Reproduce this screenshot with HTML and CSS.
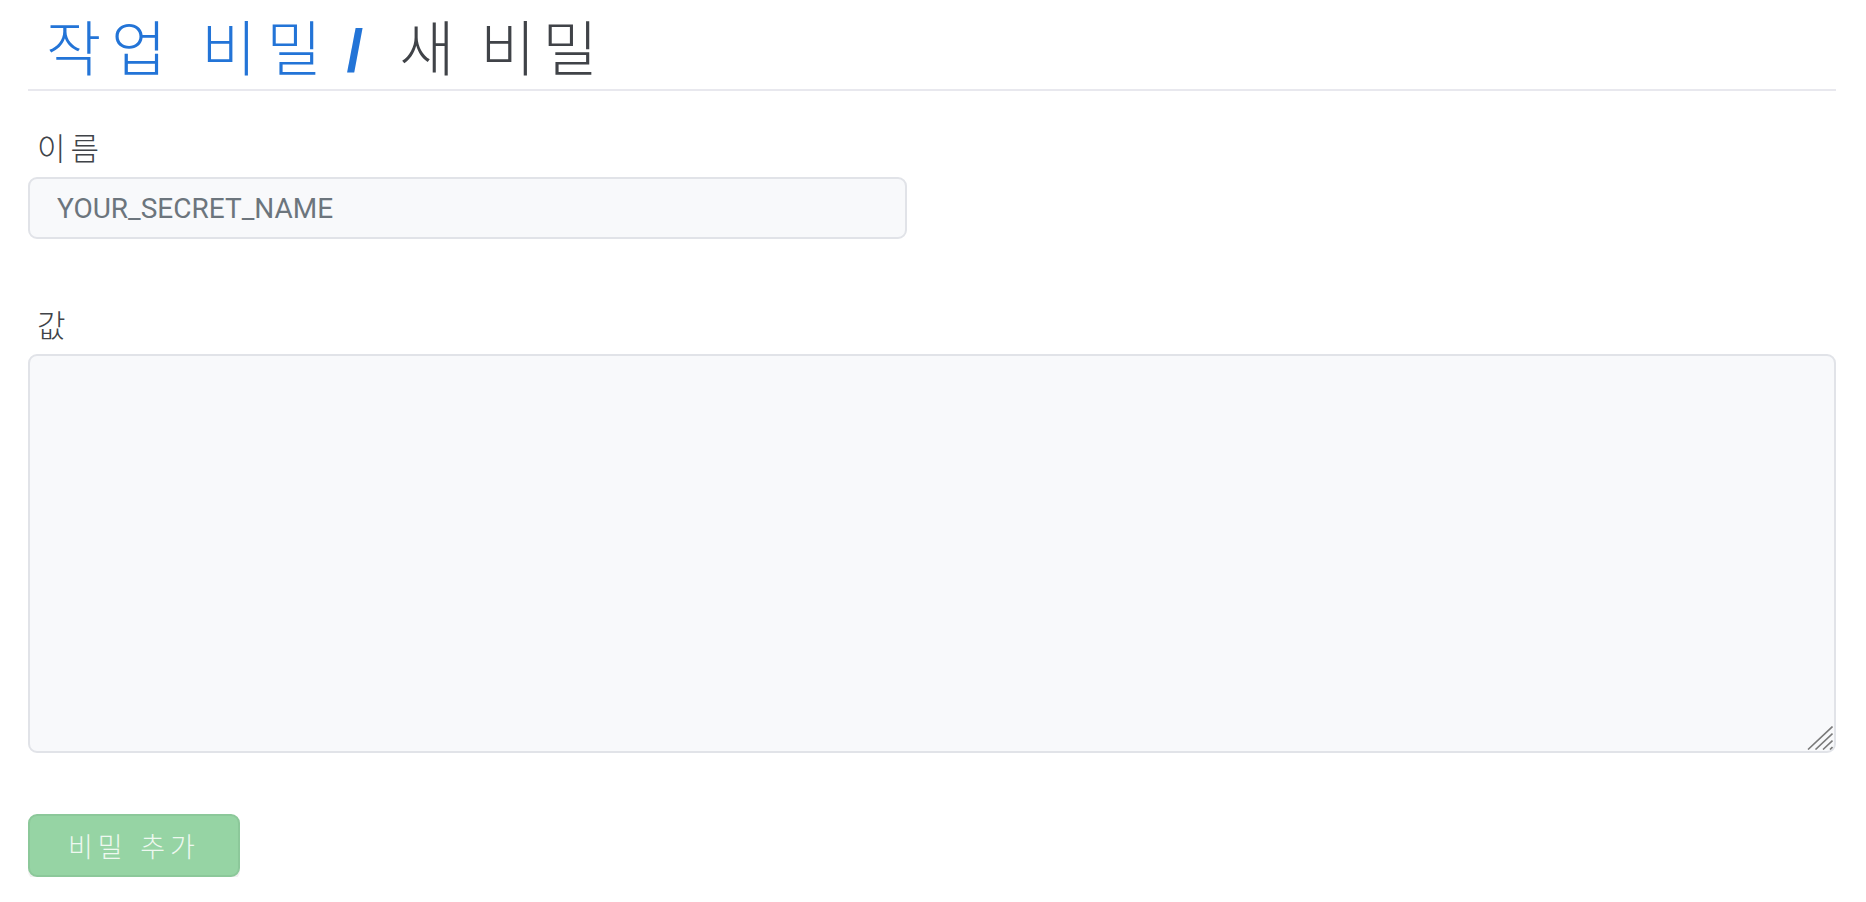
FILE: index.html
```html
<!DOCTYPE html>
<html lang="ko">
<head>
<meta charset="utf-8">
<title>새 비밀</title>
<link rel="stylesheet" href="styles.css">
</head>
<body>
<div class="page">
  <h1 class="title"><a class="crumb" href="#">작업 비밀</a><span class="sep">/</span><span class="current">새 비밀</span></h1>
  <form class="secret-form">
    <div class="field field-name">
      <label class="field-label" for="name">이름</label>
      <input class="text-input" id="name" type="text" placeholder="YOUR_SECRET_NAME">
    </div>
    <div class="field field-value">
      <label class="field-label" for="value">값</label>
      <textarea class="text-area" id="value"></textarea>
      <svg class="resizer" width="26" height="24" viewBox="0 0 26 24" aria-hidden="true">
        <path d="M1 23.5 L25.5 0.5 M8.5 23.5 L25.5 7.5 M16 23.5 L25.5 14.5 M23 23.5 L25.5 21" stroke="#7a7a7a" stroke-width="1.6" fill="none"/>
      </svg>
    </div>
    <button class="btn-submit" type="submit" disabled>비밀 추가</button>
  </form>
</div>
</body>
</html>
```

FILE: styles.css
```css
html, body {
  margin: 0;
  padding: 0;
  background: #ffffff;
}

body {
  font-family: "Noto Sans CJK KR", "Noto Sans", sans-serif;
  color: #404348;
}

.page {
  padding: 0 30px 0 28px;
}

.title {
  margin: 0;
  padding: 0 0 0 18px;
  height: 89px;
  font-size: 60px;
  font-weight: 300;
  line-height: 89px;
  letter-spacing: 10px;
  word-spacing: -2px;
  border-bottom: 2px solid #e8e8ee;
  white-space: nowrap;
}

.crumb {
  color: #2374d7;
  text-decoration: none;
}

.sep {
  color: #2374d7;
  font-family: "Liberation Sans", sans-serif;
  font-weight: 700;
  letter-spacing: 0;
  line-height: 0;
  margin: 0 36px 0 15px;
}

.current {
  color: #404348;
  letter-spacing: 7px;
  word-spacing: -5px;
}

.secret-form {
  display: flex;
  flex-direction: column;
  align-items: flex-start;
}

.field {
  display: flex;
  flex-direction: column;
  align-items: stretch;
  align-self: stretch;
}

.field-name {
  padding-top: 36px;
  margin-bottom: 65px;
}

.field-value {
  position: relative;
}

.field-label {
  display: block;
  font-size: 31px;
  font-weight: 300;
  line-height: 40px;
  letter-spacing: 5px;
  padding-left: 9px;
  margin-bottom: 10px;
  color: #404348;
}

.text-input {
  box-sizing: border-box;
  width: 879px;
  height: 62px;
  padding: 0 27px;
  border: 2px solid #e1e3e8;
  border-radius: 9px;
  background: #f8f9fb;
  font-family: Roboto, "Liberation Sans", sans-serif;
  font-size: 28px;
  color: #495057;
  outline: none;
}

.text-input::placeholder {
  color: #6c757d;
  opacity: 1;
}

.text-area {
  display: block;
  box-sizing: border-box;
  width: 100%;
  height: 399px;
  padding: 12px 27px;
  border: 2px solid #e1e3e8;
  border-radius: 9px;
  background: #f8f9fb;
  font-family: Roboto, "Liberation Sans", sans-serif;
  font-size: 28px;
  color: #495057;
  outline: none;
  resize: none;
}

.resizer {
  position: absolute;
  right: 3px;
  bottom: 3px;
  pointer-events: none;
}

.btn-submit {
  margin-top: 61px;
  box-sizing: border-box;
  height: 63px;
  padding: 0 38px;
  border: 2px solid #8cc89a;
  border-radius: 9px;
  background: #96d4a4;
  color: #eef8f0;
  font-family: "Noto Sans CJK KR", sans-serif;
  font-size: 27px;
  font-weight: 300;
  letter-spacing: 5px;
  box-shadow: 0 3px 0 rgba(0, 0, 0, 0.06);
  cursor: default;
}
```
